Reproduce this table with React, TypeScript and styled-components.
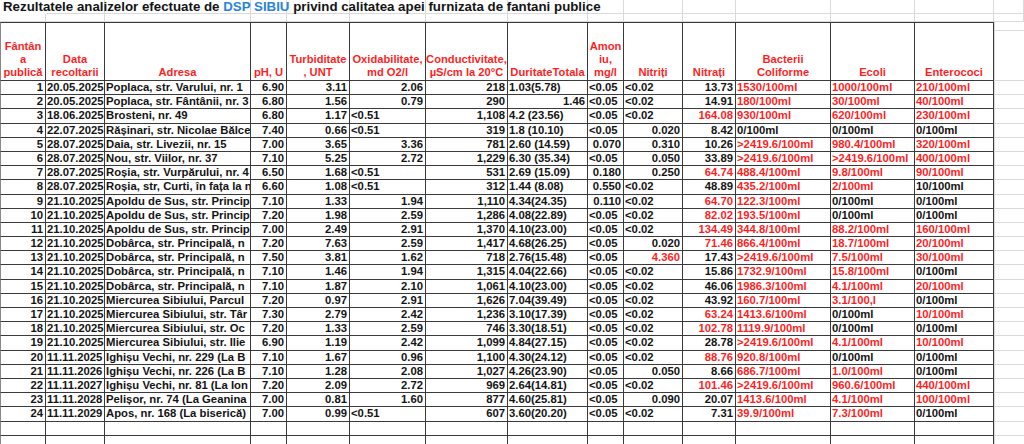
import React, { FC, ReactNode } from 'react'
import { createGlobalStyle, styled } from 'styled-components'

const RED = '#ff1f1f'
const INK = '#141414'
const BLUE = '#2a84d6'
const LINE = '#3a3a3a'
const GRID = '#dadada'
const COLS = '46px 59px 146px 36px 63px 76px 82px 80px 36px 59px 53px 95px 84px 79px 1fr'

const GlobalStyle = createGlobalStyle`
    html, body {
        margin: 0;
        padding: 0;
        overflow: hidden;
        background: #fff;
    }
    body {
        font-family: "Liberation Sans", Arial, sans-serif;
        font-weight: bold;
        color: ${INK};
    }
`

const headers: ReactNode[] = [
    <>Fântân<br />a<br />publică</>,
    <>Data<br />recoltarii</>,
    'Adresa',
    'pH, U',
    <>Turbiditate<br />, UNT</>,
    <>Oxidabilitate,<br />md O2/l</>,
    <>Conductivitate,<br />µS/cm la 20°C</>,
    'DuritateTotala',
    <>Amon<br />iu,<br />mg/l</>,
    'Nitriți',
    'Nitrați',
    <>Bacterii<br />Coliforme</>,
    'Ecoli',
    'Enterococi',
]

// '!' in front of a value = red text
const rows: string[][] = [
    ['1', '20.05.2025', 'Poplaca, str. Varului, nr. 1', '6.90', '3.11', '2.06', '218', '1.03(5.78)', '<0.05', '<0.02', '13.73', '!1530/100ml', '!1000/100ml', '!210/100ml'],
    ['2', '20.05.2025', 'Poplaca, str. Fântânii, nr. 3', '6.80', '1.56', '0.79', '290', '1.46', '<0.05', '<0.02', '14.91', '!180/100ml', '!30/100ml', '!40/100ml'],
    ['3', '18.06.2025', 'Brosteni, nr. 49', '6.80', '1.17', '<0.51', '1,108', '4.2 (23.56)', '<0.05', '<0.02', '!164.08', '!930/100ml', '!620/100ml', '!230/100ml'],
    ['4', '22.07.2025', 'Rășinari, str. Nicolae Bălce', '7.40', '0.66', '<0.51', '319', '1.8 (10.10)', '<0.05', '0.020', '8.42', '0/100ml', '0/100ml', '0/100ml'],
    ['5', '28.07.2025', 'Daia, str. Livezii, nr. 15', '7.00', '3.65', '3.36', '781', '2.60 (14.59)', '0.070', '0.310', '10.26', '!>2419.6/100ml', '!980.4/100ml', '!320/100ml'],
    ['6', '28.07.2025', 'Nou, str. Viilor, nr. 37', '7.10', '5.25', '2.72', '1,229', '6.30 (35.34)', '<0.05', '0.050', '33.89', '!>2419.6/100ml', '!>2419.6/100ml', '!400/100ml'],
    ['7', '28.07.2025', 'Roșia, str. Vurpărului, nr. 4', '6.50', '1.68', '<0.51', '531', '2.69 (15.09)', '0.180', '0.250', '!64.74', '!488.4/100ml', '!9.8/100ml', '!90/100ml'],
    ['8', '28.07.2025', 'Roșia, str, Curti, în fața la n', '6.60', '1.08', '<0.51', '312', '1.44 (8.08)', '0.550', '<0.02', '48.89', '!435.2/100ml', '!2/100ml', '10/100ml'],
    ['9', '21.10.2025', 'Apoldu de Sus, str. Princip', '7.10', '1.33', '1.94', '1,110', '4.34(24.35)', '0.110', '<0.02', '!64.70', '!122.3/100ml', '0/100ml', '0/100ml'],
    ['10', '21.10.2025', 'Apoldu de Sus, str. Princip', '7.20', '1.98', '2.59', '1,286', '4.08(22.89)', '<0.05', '<0.02', '!82.02', '!193.5/100ml', '0/100ml', '0/100ml'],
    ['11', '21.10.2025', 'Apoldu de Sus, str. Princip', '7.00', '2.49', '2.91', '1,370', '4.10(23.00)', '<0.05', '<0.02', '!134.49', '!344.8/100ml', '!88.2/100ml', '!160/100ml'],
    ['12', '21.10.2025', 'Dobârca, str. Principală, n', '7.20', '7.63', '2.59', '1,417', '4.68(26.25)', '<0.05', '0.020', '!71.46', '!866.4/100ml', '!18.7/100ml', '!20/100ml'],
    ['13', '21.10.2025', 'Dobârca, str. Principală, n', '7.50', '3.81', '1.62', '718', '2.76(15.48)', '<0.05', '!4.360', '17.43', '!>2419.6/100ml', '!7.5/100ml', '!30/100ml'],
    ['14', '21.10.2025', 'Dobârca, str. Principală, n', '7.10', '1.46', '1.94', '1,315', '4.04(22.66)', '<0.05', '<0.02', '15.86', '!1732.9/100ml', '!15.8/100ml', '0/100ml'],
    ['15', '21.10.2025', 'Dobârca, str. Principală, n', '7.10', '1.87', '2.10', '1,061', '4.10(23.00)', '<0.05', '<0.02', '46.06', '!1986.3/100ml', '!4.1/100ml', '!20/100ml'],
    ['16', '21.10.2025', 'Miercurea Sibiului, Parcul', '7.20', '0.97', '2.91', '1,626', '7.04(39.49)', '<0.05', '<0.02', '43.92', '!160.7/100ml', '!3.1/100,l', '0/100ml'],
    ['17', '21.10.2025', 'Miercurea Sibiului, str. Târ', '7.30', '2.79', '2.42', '1,236', '3.10(17.39)', '<0.05', '<0.02', '!63.24', '!1413.6/100ml', '0/100ml', '!10/100ml'],
    ['18', '21.10.2025', 'Miercurea Sibiului, str. Oc', '7.20', '1.33', '2.59', '746', '3.30(18.51)', '<0.05', '<0.02', '!102.78', '!1119.9/100ml', '0/100ml', '0/100ml'],
    ['19', '21.10.2025', 'Miercurea Sibiului, str. Ilie', '6.90', '1.19', '2.42', '1,099', '4.84(27.15)', '<0.05', '<0.02', '28.78', '!>2419.6/100ml', '!4.1/100ml', '!10/100ml'],
    ['20', '11.11.2025', 'Ighișu Vechi, nr. 229 (La B', '7.10', '1.67', '0.96', '1,100', '4.30(24.12)', '<0.05', '<0.02', '!88.76', '!920.8/100ml', '0/100ml', '0/100ml'],
    ['21', '11.11.2026', 'Ighișu Vechi, nr. 226 (La B', '7.10', '1.28', '2.08', '1,027', '4.26(23.90)', '<0.05', '0.050', '8.66', '!686.7/100ml', '!1.0/100ml', '0/100ml'],
    ['22', '11.11.2027', 'Ighișu Vechi, nr. 81 (La Ion', '7.20', '2.09', '2.72', '969', '2.64(14.81)', '<0.05', '<0.02', '!101.46', '!>2419.6/100ml', '!960.6/100ml', '!440/100ml'],
    ['23', '11.11.2028', 'Pelișor, nr. 74 (La Geanina', '7.00', '0.81', '1.60', '877', '4.60(25.81)', '<0.05', '0.090', '20.07', '!1413.6/100ml', '!4.1/100ml', '!100/100ml'],
    ['24', '11.11.2029', 'Apos, nr. 168 (La biserică)', '7.00', '0.99', '<0.51', '607', '3.60(20.20)', '<0.05', '<0.02', '7.31', '!39.9/100ml', '!7.3/100ml', '0/100ml'],
]

const alignOf = (col: number, text: string) => {
    if (col === 1 || col === 2) return 'left'
    return /^[\d.,]+$/.test(text) ? 'right' : 'left'
}

const App: FC = () => {
    return (
        <>
            <GlobalStyle />
            <Sheet>
                <Row $h={14}>
                    <TitleCell>
                        Rezultatele analizelor efectuate de <Blue>DSP SIBIU</Blue> privind calitatea apei furnizata de fantani publice
                    </TitleCell>
                    {Array.from({ length: 14 }, (_, i) => <GridCell key={i} />)}
                </Row>
                <Row $h={7.5}>
                    {Array.from({ length: 15 }, (_, i) => <GridCell key={i} />)}
                </Row>
                <Row $h={59.5}>
                    {headers.map((h, i) => <HeadCell key={i}>{h}</HeadCell>)}
                    <Filler $split />
                </Row>
                {rows.map((r, i) => (
                    <Row key={i} $h={14.2}>
                        {r.map((v, j) => {
                            const red = v.startsWith('!')
                            const text = red ? v.slice(1) : v
                            return <DataCell key={j} $align={alignOf(j, text)} $red={red}>{text}</DataCell>
                        })}
                        <Filler />
                    </Row>
                ))}
                {[0, 1].map(i => (
                    <Row key={'e' + i} $h={14.2}>
                        {Array.from({ length: 14 }, (_, j) => <DataCell key={j} />)}
                        <Filler />
                    </Row>
                ))}
            </Sheet>
        </>
    )
}

export default App

const Sheet = styled.div`
    display: flex;
    flex-direction: column;
    width: 1024px;
`
const Row = styled.div<{ $h: number }>`
    display: grid;
    grid-template-columns: ${COLS};
    height: ${({ $h }) => $h}px;
`
const GridCell = styled.div`
    box-sizing: border-box;
    border-right: 1px solid ${GRID};
    border-bottom: 1px solid ${GRID};
`
const TitleCell = styled.div`
    box-sizing: border-box;
    grid-column: 1 / 2;
    grid-row: 1;
    position: relative;
    z-index: 1;
    padding-left: 3px;
    font-size: 13.3px;
    line-height: 14px;
    white-space: nowrap;
    overflow: visible;
    color: ${INK};
`
const Blue = styled.span`
    color: ${BLUE};
`
const HeadCell = styled.div`
    box-sizing: border-box;
    display: flex;
    flex-direction: column;
    justify-content: flex-end;
    align-items: center;
    text-align: center;
    border-top: 1px solid ${LINE};
    border-right: 1px solid ${LINE};
    border-bottom: 1px solid ${LINE};
    padding-bottom: 1px;
    font-size: 11.2px;
    line-height: 13px;
    color: ${RED};
    white-space: nowrap;
    overflow: hidden;
    &:first-child {
        border-left: 1px solid #888;
    }
`
const DataCell = styled.div<{ $align?: string; $red?: boolean }>`
    box-sizing: border-box;
    border-right: 1px solid ${LINE};
    border-bottom: 1px solid ${LINE};
    padding: 0 2px 0 1px;
    font-size: 11.3px;
    line-height: 13.4px;
    text-align: ${({ $align }) => $align || 'left'};
    color: ${({ $red }) => ($red ? RED : INK)};
    white-space: nowrap;
    overflow: hidden;
    &:first-child {
        border-left: 1px solid #888;
    }
`
const Filler = styled.div<{ $split?: boolean }>`
    box-sizing: border-box;
    border-bottom: 1px solid ${GRID};
    border-left: 1px solid ${GRID};
    background: ${({ $split }) => ($split ? `linear-gradient(${GRID}, ${GRID}) 0 8px / 100% 1px no-repeat` : 'none')};
`
